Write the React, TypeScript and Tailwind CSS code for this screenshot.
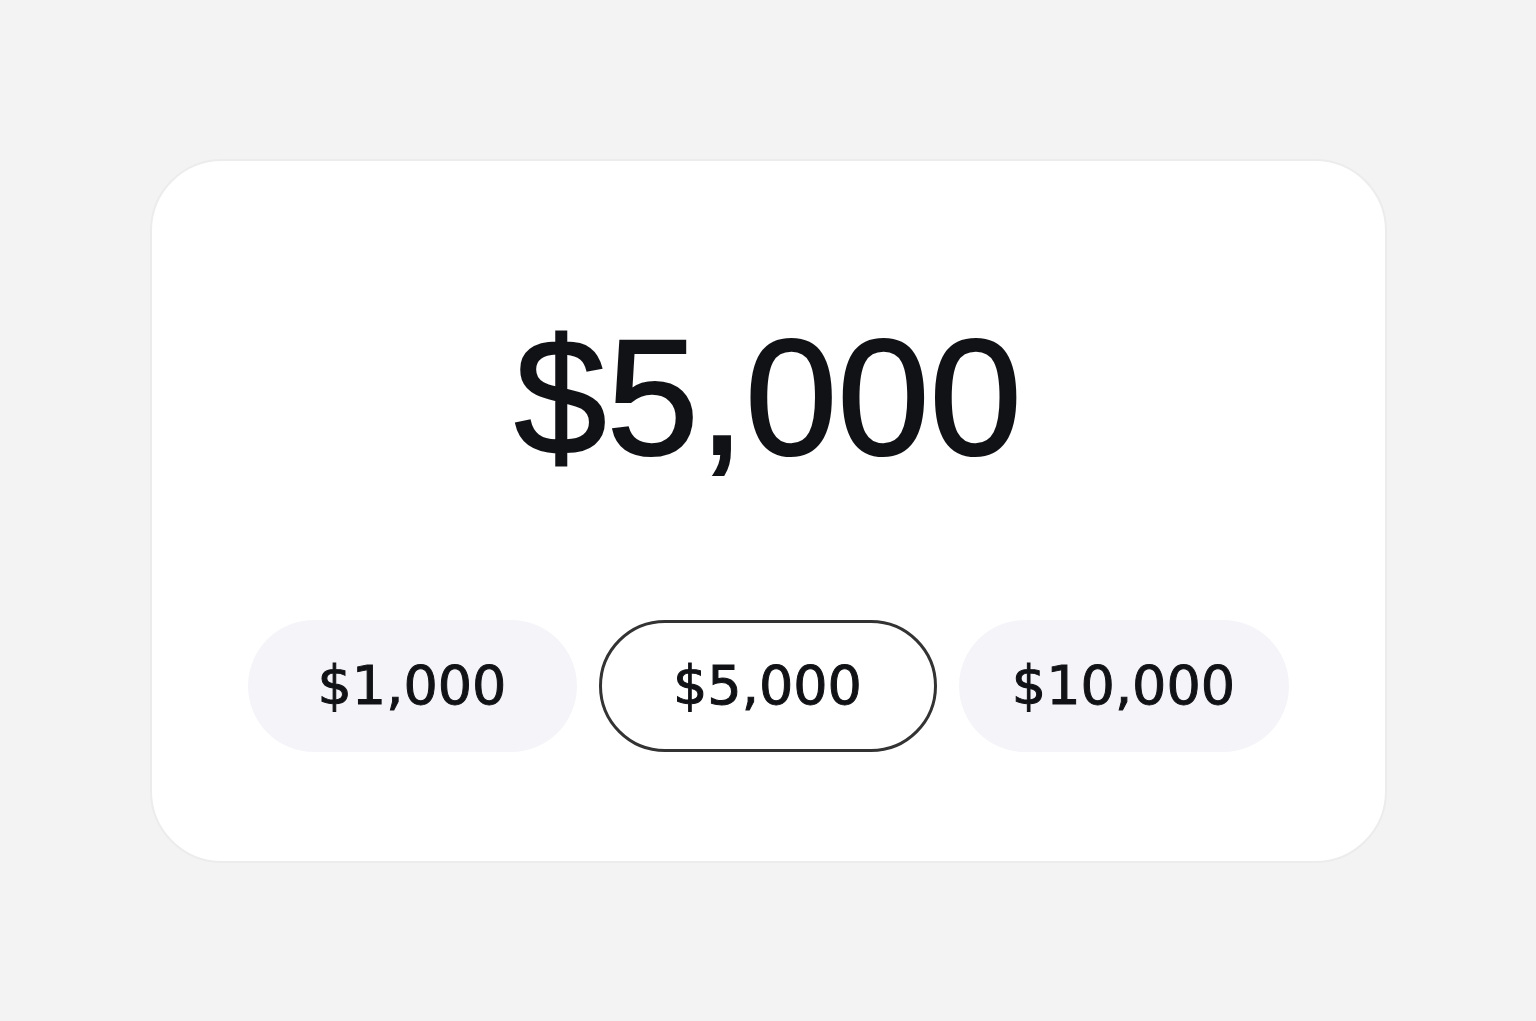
import React, { useState } from "react";

const amounts = [
  { value: 1000, label: "$1,000", width: "w-[329px]" },
  { value: 5000, label: "$5,000", width: "w-[338px]" },
  { value: 10000, label: "$10,000", width: "w-[330px]" },
];

export default function App() {
  const [selected, setSelected] = useState(5000);
  const current = amounts.find((a) => a.value === selected)!;

  return (
    <div className="flex h-[1021px] w-full items-center justify-center bg-[#f3f3f3]">
      <div className="flex h-[704px] w-[1237px] flex-col items-center rounded-[72px] border-2 border-[#ececec] bg-white px-[96px] pt-[153px]">
        <div
          className="text-[166px] font-normal leading-none text-[#111216] [-webkit-text-stroke:2px_#111216]"
          style={{ fontFamily: "'Liberation Sans', Arial, sans-serif" }}
        >
          {current.label}
        </div>
        <div className="mt-[140px] flex w-full items-center justify-between">
          {amounts.map((a) => {
            const active = a.value === selected;
            return (
              <button
                key={a.value}
                type="button"
                onClick={() => setSelected(a.value)}
                className={`flex h-[132px] ${a.width} items-center justify-center rounded-full text-[54px] leading-none text-[#111216] [-webkit-text-stroke:1px_#111216] ${
                  active
                    ? "border-[3px] border-[#333333] bg-white"
                    : "bg-[#f5f5f9]"
                }`}
                style={{ fontFamily: "'DejaVu Sans', sans-serif" }}
              >
                {a.label}
              </button>
            );
          })}
        </div>
      </div>
    </div>
  );
}
